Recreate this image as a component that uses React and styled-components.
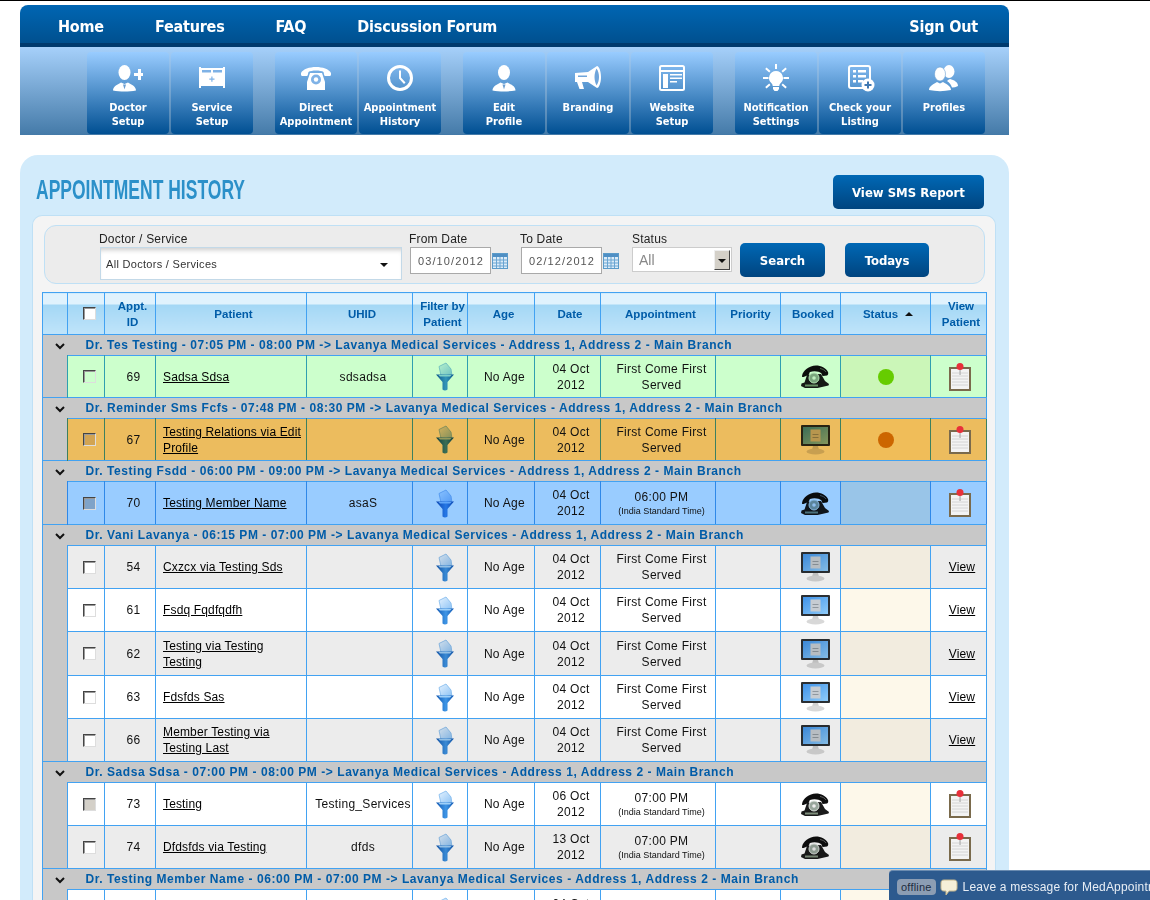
import React from 'react';
import styled, { createGlobalStyle } from 'styled-components';

const GlobalStyle = createGlobalStyle`
  html, body {
    margin: 0;
    height: 900px;
    overflow: hidden;
    background: #fff;
    font-family: "Liberation Sans", Arial, sans-serif;
  }
`;

const Page = styled.div`
  width: 1150px;
  height: 900px;
  overflow: hidden;
  position: relative;
  box-sizing: border-box;
  border-top: 1px solid #000;
  padding: 4px 141px 0 20px;
`;

const Nav = styled.nav`
  height: 42px;
  box-sizing: border-box;
  display: flex;
  align-items: center;
  gap: 51px;
  padding: 4px 31px 0 38px;
  border-radius: 8px 8px 0 0;
  border-bottom: 4px solid #003a6e;
  background: linear-gradient(#0066b3, #00508f);
`;

const NavLink = styled.a`
  color: #fff;
  font: bold 16px "DejaVu Sans Condensed", "DejaVu Sans", sans-serif;
  letter-spacing: -0.2px;
  ${({ $right }) => $right && 'margin-left: auto;'}
`;

const Toolbar = styled.div`
  height: 88px;
  box-sizing: border-box;
  display: flex;
  gap: 22px;
  padding: 5px 0 1px 67px;
  background: linear-gradient(#a6d0fa, #447aa8);
`;

const TileGroup = styled.div`
  display: flex;
  gap: 2px;
`;

const Tile = styled.a`
  width: 82px;
  box-sizing: border-box;
  padding-top: 12px;
  display: flex;
  flex-direction: column;
  align-items: center;
  border-radius: 4px;
  background: linear-gradient(#99ccff, #004f92);
  color: #fff;
  font: bold 11px/14px "DejaVu Sans Condensed", "DejaVu Sans", sans-serif;
  text-align: center;
  svg {
    display: block;
    margin-bottom: 9px;
  }
`;

const Panel = styled.main`
  margin-top: 20px;
  height: 760px;
  box-sizing: border-box;
  padding: 20px 13px 0 12px;
  border-radius: 18px 18px 0 0;
  background: #d2ebfb;
`;

const TitleRow = styled.div`
  height: 40px;
  display: flex;
  justify-content: space-between;
  align-items: flex-start;
  padding: 0 12px 0 4px;
`;

const Title = styled.h1`
  margin: -2px 0 0;
  font: bold 17.5px/20px "Liberation Sans Narrow", "Liberation Sans", sans-serif;
  color: #2b90c9;
  transform: scaleY(1.6);
  transform-origin: left top;
`;

const BlueButton = styled.button`
  height: 34px;
  width: ${({ $w }) => $w}px;
  padding: 0;
  border: 0;
  border-radius: 5px;
  background: linear-gradient(#0068b5, #00447f);
  color: #fff;
  font: bold 13px "DejaVu Sans Condensed", "DejaVu Sans", sans-serif;
`;

const Inner = styled.div`
  height: 720px;
  box-sizing: border-box;
  padding: 9px 10px 0 10px;
  border: 1px solid #bfe0f5;
  border-bottom: 0;
  border-radius: 10px 10px 0 0;
  background: #f4f4f4;
`;

const FilterBar = styled.div`
  height: 59px;
  box-sizing: border-box;
  margin: 0 0 8px 1px;
  padding: 6px 0 0 54px;
  display: flex;
  border: 1px solid #bfe0f5;
  border-radius: 12px;
  background: #ececec;
`;

const Field = styled.div`
  margin-right: ${({ $mr }) => $mr || 0}px;
`;

const FieldLabel = styled.div`
  font-size: 12px;
  line-height: 14px;
  height: 15px;
  color: #222;
  letter-spacing: 0.2px;
`;

const FieldRow = styled.div`
  display: flex;
  align-items: center;
  gap: 1px;
`;

const DoctorSelect = styled.div`
  width: 302px;
  height: 33px;
  margin-left: 1px;
  box-sizing: border-box;
  padding: 0 13px 0 5px;
  display: flex;
  align-items: center;
  justify-content: space-between;
  border: 1px solid #c3d9e8;
  background: #fff;
  box-shadow: inset 0 5px 5px -3px #ccc;
  font-size: 11px;
  letter-spacing: 0.3px;
  color: #333;
`;

const DownArrow = styled.span`
  width: 0;
  height: 0;
  border-left: 4px solid transparent;
  border-right: 4px solid transparent;
  border-top: 4px solid #111;
  margin-top: 2px;
`;

const DateInput = styled.div`
  width: 81px;
  height: 27px;
  margin-left: 1px;
  box-sizing: border-box;
  padding-left: 7px;
  display: flex;
  align-items: center;
  border: 1px solid #a9a9a9;
  background: #fff;
  font-size: 11px;
  letter-spacing: 1.1px;
  color: #555;
`;

const StatusSelect = styled.div`
  width: 100px;
  height: 25px;
  box-sizing: border-box;
  padding: 0 1px 0 6px;
  display: flex;
  align-items: center;
  justify-content: space-between;
  border: 1px solid #ccc;
  background: #fff;
  font-size: 14px;
  color: #888;
`;

const SelectButton = styled.span`
  width: 16px;
  height: 20px;
  display: flex;
  align-items: center;
  justify-content: center;
  box-sizing: border-box;
  border: 1px solid;
  border-color: #eee #444 #444 #eee;
  background: #d4d0c8;
`;

const ButtonSlot = styled.div`
  margin: 11px ${({ $mr }) => $mr || 0}px 0 ${({ $ml }) => $ml || 0}px;
`;

const Grid = styled.table`
  width: 944px;
  margin-left: -1px;
  table-layout: fixed;
  border-collapse: collapse;
  font-size: 12px;
  color: #111;
`;

const Head = styled.th`
  height: 41px;
  padding: 0 0 0 ${({ $pl }) => ($pl === undefined ? 5 : $pl)}px;
  border: 1px solid #42a2f2;
  background: linear-gradient(#e0f2fd 0 11px, #a3d7f5 11px, #c0e4fa);
  color: #005ca8;
  font-size: 11.5px;
  line-height: 16px;
  font-weight: bold;
`;

const SortArrow = styled.span`
  display: inline-block;
  width: 0;
  height: 0;
  margin: 0 0 2px 7px;
  border-left: 4px solid transparent;
  border-right: 4px solid transparent;
  border-bottom: 4px solid #111;
`;

const GroupCell = styled.td`
  height: ${({ $h }) => $h || 20}px;
  padding: 0;
  border-top: 1px solid #42a2f2;
  ${({ $edge }) => $edge === 'left' && 'border-left: 1px solid #42a2f2;'}
  ${({ $edge }) => $edge === 'right' && 'border-right: 1px solid #42a2f2;'}
  background: #c8c8c8;
  color: #005ca8;
  font-weight: bold;
  font-size: 12px;
  letter-spacing: 0.55px;
  white-space: nowrap;
  svg {
    display: block;
    margin: 2px 0 0 12px;
  }
  span {
    display: block;
    margin-left: 18px;
  }
`;

const Gutter = styled.td`
  padding: 0;
  border-left: 1px solid #42a2f2;
  border-right: 1px solid ${({ $line }) => $line};
  background: #c8c8c8;
`;

const Cell = styled.td`
  height: ${({ $h }) => $h}px;
  padding: 0 0 0 ${({ $pl }) => ($pl === undefined ? 7 : $pl)}px;
  box-sizing: border-box;
  border-left: 1px solid ${({ $line }) => $line};
  border-right: 1px solid ${({ $line }) => $line};
  border-top: 1px solid #42a2f2;
  border-bottom: 1px solid #42a2f2;
  background: ${({ $bg }) => $bg};
  text-align: ${({ $left }) => ($left ? 'left' : 'center')};
  line-height: 16px;
  letter-spacing: 0.3px;
  overflow: hidden;
  svg {
    display: block;
    margin: 0 auto;
  }
`;

const Blend = styled.div`
  mix-blend-mode: multiply;
`;

const PatientLink = styled.a`
  color: #000;
  text-decoration: underline;
  letter-spacing: 0.15px;
  white-space: nowrap;
`;

const SmallNote = styled.div`
  font-size: 9px;
  line-height: 13px;
  letter-spacing: 0;
`;

const Check = styled.input.attrs({ type: 'checkbox' })`
  appearance: none;
  display: block;
  width: 13px;
  height: 13px;
  margin: 0 auto;
  box-sizing: border-box;
  border: 1px solid;
  border-color: #444 #ddd #ddd #444;
  box-shadow: inset 1px 1px 0 #999;
  background: ${({ $fill }) => $fill};
`;

const Dot = styled.span`
  display: block;
  width: 16px;
  height: 16px;
  margin: 0 auto;
  border-radius: 50%;
  background: ${({ $color }) => $color};
`;

const Chat = styled.div`
  position: absolute;
  left: 889px;
  top: 869px;
  width: 261px;
  height: 31px;
  box-sizing: border-box;
  padding: 8px 0 0 8px;
  display: flex;
  align-items: flex-start;
  gap: 4px;
  overflow: hidden;
  white-space: nowrap;
  border-radius: 4px 0 0 0;
  border-top: 1px solid #6a8bb0;
  background: #2d5a8e;
  color: #e8eef5;
  font-size: 12px;
  letter-spacing: 0.2px;
  svg {
    flex: none;
  }
`;

const OfflineBadge = styled.span`
  flex: none;
  padding: 0 4px;
  height: 16px;
  line-height: 17px;
  border-radius: 4px;
  background: #8c9db3;
  color: #1d2c40;
  font-size: 11px;
  letter-spacing: 0.2px;
`;

const ChatText = styled.span`
  flex: none;
  margin-left: 1px;
  line-height: 16px;
`;

/* toolbar drawings, 30x28, white on the tile */
const Ico = ({ children }) => (
  <svg width="30" height="28" viewBox="0 0 30 28" fill="#fff">{children}</svg>
);

const PersonBody = ({ x = 0 }) => (
  <g transform={`translate(${x} 0)`}>
    <ellipse cx="11.5" cy="8.5" rx="6" ry="7.5" />
    <path d="M0 26.5C0 22 5 20.5 8 18.5L11.5 20L15 18.5C18 20.5 23 22 23 26.5C16 27.8 7 27.8 0 26.5Z" />
    <path d="M10 20.5h3l-1.5 5z" fill="#6c9fd2" />
  </g>
);

const DoctorIcon = () => (
  <Ico>
    <PersonBody />
    <path d="M21 9h4V5h3v4h2v3h-2v4h-3v-4h-4z" />
  </Ico>
);

const BedIcon = () => (
  <Ico>
    <path d="M2 3h2v1h22V3h2v21h-2v-2H4v2H2z" />
    <path d="M5 6h9v2.500H5zM16 6h9v2.500h-9z" fill="#7fb2e6" />
    <path d="M14.300 12.500h1.200v2h2v1.200h-2v2h-1.200v-2h-2v-1.200h2z" fill="#7fb2e6" />
  </Ico>
);

const PhoneIcon = () => (
  <Ico>
    <path d="M0 9C4 1 26 1 30 9c.4 2-.5 3-1 3h-5c-1 0-1-3-1.500-4C20 6 10 6 7.500 8 7 9 7 12 6 12H1c-.5 0-1.400-1-1-3Z" />
    <path d="M9 9h12l3 9v8H6v-8z" />
    <circle cx="15" cy="15.500" r="5" fill="#7fb2e6" />
    <circle cx="15" cy="15.500" r="2.200" fill="#fff" />
  </Ico>
);

const ClockIcon = () => (
  <Ico>
    <circle cx="15" cy="14" r="11.500" fill="none" stroke="#fff" strokeWidth="3" />
    <path d="M14 6.500h2v7l4.500 5-1.500 1.500-5-5.500z" />
  </Ico>
);

const ProfileIcon = () => (
  <Ico>
    <PersonBody x="3.500" />
  </Ico>
);

const MegaphoneIcon = () => (
  <Ico>
    <path d="M2 9l13-1 9-6c2 0 4 5 4 11s-2 11-4 11l-9-6H9l2 7H6.500L4 18H2z" />
    <path d="M23.500 4.500c1.500 2 2.500 5 2.500 8.500s-1 6.500-2.500 8.500c-1-2-2-5-2-8.500s1-6.500 2-8.500Z" fill="#6fa5db" />
    <path d="M5 11.500h9v1.500H5z" fill="#6fa5db" />
  </Ico>
);

const WebsiteIcon = () => (
  <Ico>
    <rect x="3" y="2" width="24" height="24" rx="1.500" fill="none" stroke="#fff" strokeWidth="2" />
    <path d="M4 6h22v2H4zM6 10h5v14H6zM13 10h12v1.500H13zM13 13.500h12v1.500H13zM13 17h7v1.500h-7z" />
  </Ico>
);

const BulbIcon = () => (
  <Ico>
    <path d="M15 7a7 7 0 0 1 4.500 12.300c-.8.8-1.200 1.700-1.200 2.700h-6.600c0-1-.4-1.900-1.200-2.700A7 7 0 0 1 15 7Z" />
    <path d="M12 23h6v2l-1.500 2h-3L12 25z" />
    <path d="M14 0h2v5h-2zM2 13h5.500v2H2zM22.500 13H28v2h-5.500zM5.500 3.500l4 3.500-1.300 1.500-4-3.500zM24.500 3.500l1.300 1.500-4 3.500-1.300-1.500zM8.200 19.500l1.300 1.500-4 3.500L4.200 23zM21.800 19.500l4 3.500-1.300 1.500-4-3.500z" />
  </Ico>
);

const ListingIcon = () => (
  <Ico>
    <rect x="4" y="2" width="21" height="22" rx="2" fill="none" stroke="#fff" strokeWidth="2" />
    <path d="M8 6h3v2.500H8zM13 6h8v2.500h-8zM8 11h3v2.500H8zM13 11h8v2.500h-8zM8 16h3v2.500H8zM13 16h5v2.500h-5z" />
    <circle cx="23" cy="21" r="6.500" fill="#fff" />
    <path d="M22 17.500h2V20h2.500v2H24v2.500h-2V22h-2.500v-2H22z" fill="#3f78b2" />
  </Ico>
);

const PeopleIcon = () => (
  <Ico>
    <ellipse cx="20" cy="7.500" rx="5.500" ry="6.500" />
    <path d="M21 15c4 1 8 3 8 7-2 1-4 1.500-6 1.500-1-3-2.500-5-5-6.500 1-1 2-1.500 3-2Z" />
    <ellipse cx="11" cy="10" rx="5.500" ry="7" fill="#fff" stroke="#6c9fd2" strokeWidth=".6" />
    <path d="M0 26c0-4 5-6 8-8l3 1.500 3-1.500c3 2 8 4 8 8-7 1.500-15 1.500-22 0Z" />
  </Ico>
);

/* table drawings */
const FunnelIcon = () => (
  <svg width="18" height="29" viewBox="0 0 18 29">
    <defs>
      <linearGradient id="funnelBody" x1="0" y1="0" x2="1" y2="0">
        <stop offset="0" stopColor="#0f55b0" />
        <stop offset=".55" stopColor="#3f96e6" />
        <stop offset="1" stopColor="#0f55b0" />
      </linearGradient>
      <linearGradient id="funnelPaper" x1="0" y1="0" x2="1" y2="1">
        <stop offset="0" stopColor="#e4f2ff" />
        <stop offset="1" stopColor="#8cc2f4" />
      </linearGradient>
    </defs>
    <path d="M3 4.500L10 1l5 6 1 6.500H5z" fill="url(#funnelPaper)" stroke="#7db8ec" strokeWidth=".8" />
    <path d="M0 12.500h18l-6.500 7.500v7.500c-1.500 1.300-3.500 1.300-5 0V20z" fill="url(#funnelBody)" />
    <path d="M2.500 13h13l-1.500 1.600H4z" fill="#9fd0f8" />
  </svg>
);

const TelephoneIcon = () => (
  <svg width="30" height="23" viewBox="0 0 30 23">
    <path d="M2 11C3 5 9 1 16 .5c5 0 10 2.500 12 6.500 .6 1.500 0 3-1 3.500l-4 .5c-1 0-1-1.500-1.500-2.500-2.500-2.500-8-3-11.500-1.500-1 .8-.5 2-1.500 3l-5 2c-1.200.3-1.700-.5-1.500-1Z" fill="#0e0e0e" />
    <path d="M7 10l14-1 4 7 4 3-.5 1.500-11 2.500H5l-4-2 .5-2.500 3-1z" fill="#1a1a1a" />
    <circle cx="14" cy="13" r="5" fill="#98a69c" stroke="#dfe4df" strokeWidth="1" />
    <circle cx="14" cy="13" r="1.800" fill="#eee" />
    <path d="M5 19.500h13v2H5z" fill="#7f8f7c" />
    <path d="M20 3.500c3 .6 5 1.800 6 3.500" fill="none" stroke="#777" strokeWidth=".8" />
  </svg>
);

const MonitorIcon = () => (
  <svg width="29" height="30" viewBox="0 0 29 30">
    <defs>
      <linearGradient id="screenFill" x1="0" y1="0" x2="1" y2="1">
        <stop offset="0" stopColor="#3f93ea" />
        <stop offset="1" stopColor="#8fcbf8" />
      </linearGradient>
    </defs>
    <rect x="0" y="0" width="29" height="21" rx="1" fill="#2b2f33" />
    <rect x="2" y="2" width="25" height="17" fill="url(#screenFill)" />
    <rect x="9.500" y="4.500" width="10" height="12" fill="#c6ccd2" />
    <path d="M11.500 9h6v1h-6zM11.500 12h6v1h-6z" fill="#8f979e" />
    <path d="M12 21h5l1 4h-7z" fill="#cfcfcf" />
    <ellipse cx="14.500" cy="26.500" rx="9" ry="3" fill="#d8d8d8" />
  </svg>
);

const ClipboardIcon = () => (
  <svg width="22" height="28" viewBox="0 0 22 28">
    <rect x="0" y="4" width="22" height="24" fill="#7a6a4c" />
    <rect x="2" y="6" width="18" height="20" fill="#f3f3f3" />
    <path d="M3 10h16M3 13h16M3 16h16M3 19h16M3 22h16" stroke="#d4d4d4" strokeWidth="1" />
    <rect x="10.300" y="5" width="1.500" height="7" fill="#b9b9b9" />
    <circle cx="11" cy="3.500" r="3.500" fill="#e8303a" />
  </svg>
);

const CalendarIcon = () => (
  <svg width="16" height="16" viewBox="0 0 16 16">
    <rect x=".5" y=".5" width="15" height="15" fill="#dcecf8" stroke="#5b9bc9" />
    <rect x="1" y="1" width="14" height="3" fill="#4f8fc4" />
    <path d="M1 7h14M1 10h14M1 13h14M4.500 4v11M8 4v11M11.500 4v11" stroke="#6aa5d2" strokeWidth="1" />
  </svg>
);

const Chevron = () => (
  <svg width="10" height="7" viewBox="0 0 10 7">
    <path d="M1 1l4 4 4-4" fill="none" stroke="#111" strokeWidth="2" />
  </svg>
);

const tiles = [
  [
    { label: ['Doctor', 'Setup'], icon: <DoctorIcon /> },
    { label: ['Service', 'Setup'], icon: <BedIcon /> },
  ],
  [
    { label: ['Direct', 'Appointment'], icon: <PhoneIcon /> },
    { label: ['Appointment', 'History'], icon: <ClockIcon /> },
  ],
  [
    { label: ['Edit', 'Profile'], icon: <ProfileIcon /> },
    { label: ['Branding'], icon: <MegaphoneIcon /> },
    { label: ['Website', 'Setup'], icon: <WebsiteIcon /> },
  ],
  [
    { label: ['Notification', 'Settings'], icon: <BulbIcon /> },
    { label: ['Check your', 'Listing'], icon: <ListingIcon /> },
    { label: ['Profiles'], icon: <PeopleIcon /> },
  ],
];

const columns = [25, 37, 51, 151, 106, 55, 67, 66, 115, 65, 60, 90, 56];

const themes = {
  green: { bg: '#ccffcc', status: '#cbf6b8', line: '#2f9fb0', check: 'transparent' },
  orange: { bg: '#ecbc5e', status: '#f0bd59', line: '#3d8060', check: '#d2a452' },
  blue: { bg: '#99ccff', status: '#99c5e8', line: '#2f88e8', check: '#7fa3c8' },
  grey: { bg: '#ececec', status: '#f2ecdf', line: '#42a2f2', check: '#fff' },
  white: { bg: '#ffffff', status: '#fdf8ea', line: '#42a2f2', check: '#fff' },
};

const groups = [
  {
    title: 'Dr. Tes Testing - 07:05 PM - 08:00 PM -> Lavanya Medical Services - Address 1, Address 2 - Main Branch',
    h: 20,
    rows: [{ id: 69, name: ['Sadsa Sdsa'], uhid: 'sdsadsa', day: '04 Oct', booked: 'phone', dot: '#66cc00', view: true, theme: 'green', h: 42 }],
  },
  {
    title: 'Dr. Reminder Sms Fcfs - 07:48 PM - 08:30 PM -> Lavanya Medical Services - Address 1, Address 2 - Main Branch',
    h: 20,
    rows: [{ id: 67, name: ['Testing Relations via Edit', 'Profile'], uhid: '', day: '04 Oct', booked: 'web', dot: '#cc6600', view: true, theme: 'orange', h: 42 }],
  },
  {
    title: 'Dr. Testing Fsdd - 06:00 PM - 09:00 PM -> Lavanya Medical Services - Address 1, Address 2 - Main Branch',
    h: 20,
    rows: [{ id: 70, name: ['Testing Member Name'], uhid: 'asaS', day: '04 Oct', time: '06:00 PM', booked: 'phone', view: true, theme: 'blue', h: 43 }],
  },
  {
    title: 'Dr. Vani Lavanya - 06:15 PM - 07:00 PM -> Lavanya Medical Services - Address 1, Address 2 - Main Branch',
    h: 19,
    rows: [
      { id: 54, name: ['Cxzcx via Testing Sds'], uhid: '', day: '04 Oct', booked: 'web', theme: 'grey', h: 43 },
      { id: 61, name: ['Fsdq Fqdfqdfh'], uhid: '', day: '04 Oct', booked: 'web', theme: 'white', h: 43 },
      { id: 62, name: ['Testing via Testing', 'Testing'], uhid: '', day: '04 Oct', booked: 'web', theme: 'grey', h: 44 },
      { id: 63, name: ['Fdsfds Sas'], uhid: '', day: '04 Oct', booked: 'web', theme: 'white', h: 43 },
      { id: 66, name: ['Member Testing via', 'Testing Last'], uhid: '', day: '04 Oct', booked: 'web', theme: 'grey', h: 43 },
    ],
  },
  {
    title: 'Dr. Sadsa Sdsa - 07:00 PM - 08:00 PM -> Lavanya Medical Services - Address 1, Address 2 - Main Branch',
    h: 19,
    rows: [
      { id: 73, name: ['Testing'], uhid: 'Testing_Services', day: '06 Oct', time: '07:00 PM', booked: 'phone', view: true, theme: 'white', check: '#d4d0c8', h: 43 },
      { id: 74, name: ['Dfdsfds via Testing'], uhid: 'dfds', day: '13 Oct', time: '07:00 PM', booked: 'phone', view: true, theme: 'grey', h: 43 },
    ],
  },
  {
    title: 'Dr. Testing Member Name - 06:00 PM - 07:00 PM -> Lavanya Medical Services - Address 1, Address 2 - Main Branch',
    h: 19,
    rows: [{ id: 75, name: ['Testing'], uhid: '', day: '04 Oct', time: '06:00 PM', booked: 'phone', view: true, theme: 'white', h: 44 }],
  },
];

const DataRow = ({ row }) => {
  const t = themes[row.theme];
  const base = { $bg: t.bg, $line: t.line, $h: row.h };
  return (
    <tr>
      <Gutter $line={t.line} />
      <Cell {...base} $pl={7}>
        <Check $fill={row.check || t.check} readOnly />
      </Cell>
      <Cell {...base}>{row.id}</Cell>
      <Cell {...base} $left>
        <PatientLink>
          {row.name.map((line, i) => (
            <React.Fragment key={line}>
              {i > 0 && <br />}
              {line}
            </React.Fragment>
          ))}
        </PatientLink>
      </Cell>
      <Cell {...base}>{row.uhid}</Cell>
      <Cell {...base} $pl={9}>
        <Blend>
          <FunnelIcon />
        </Blend>
      </Cell>
      <Cell {...base}>No Age</Cell>
      <Cell {...base}>
        {row.day}
        <br />
        2012
      </Cell>
      <Cell {...base}>
        {row.time ? (
          <>
            {row.time}
            <SmallNote>(India Standard Time)</SmallNote>
          </>
        ) : (
          <>
            First Come First
            <br />
            Served
          </>
        )}
      </Cell>
      <Cell {...base} />
      <Cell {...base} $pl={9}>
        <Blend>{row.booked === 'phone' ? <TelephoneIcon /> : <MonitorIcon />}</Blend>
      </Cell>
      <Cell {...base} $bg={t.status} $pl={0}>
        {row.dot && <Dot $color={row.dot} />}
      </Cell>
      <Cell {...base} $pl={row.view ? 2 : 7}>
        {row.view ? <ClipboardIcon /> : <PatientLink>View</PatientLink>}
      </Cell>
    </tr>
  );
};

const App = () => (
  <Page>
    <GlobalStyle />
    <Nav>
      <NavLink>Home</NavLink>
      <NavLink>Features</NavLink>
      <NavLink>FAQ</NavLink>
      <NavLink>Discussion Forum</NavLink>
      <NavLink $right>Sign Out</NavLink>
    </Nav>
    <Toolbar>
      {tiles.map((group) => (
        <TileGroup key={group[0].label[0]}>
          {group.map((tile) => (
            <Tile key={tile.label[0]}>
              {tile.icon}
              {tile.label.map((line) => (
                <div key={line}>{line}</div>
              ))}
            </Tile>
          ))}
        </TileGroup>
      ))}
    </Toolbar>
    <Panel>
      <TitleRow>
        <Title>APPOINTMENT HISTORY</Title>
        <BlueButton $w={151}>View SMS Report</BlueButton>
      </TitleRow>
      <Inner>
        <FilterBar>
          <Field $mr={7}>
            <FieldLabel>Doctor / Service</FieldLabel>
            <DoctorSelect>
              All Doctors / Services
              <DownArrow />
            </DoctorSelect>
          </Field>
          <Field $mr={12}>
            <FieldLabel>From Date</FieldLabel>
            <FieldRow>
              <DateInput>03/10/2012</DateInput>
              <CalendarIcon />
            </FieldRow>
          </Field>
          <Field $mr={13}>
            <FieldLabel>To Date</FieldLabel>
            <FieldRow>
              <DateInput>02/12/2012</DateInput>
              <CalendarIcon />
            </FieldRow>
          </Field>
          <Field>
            <FieldLabel>Status</FieldLabel>
            <StatusSelect>
              All
              <SelectButton>
                <DownArrow />
              </SelectButton>
            </StatusSelect>
          </Field>
          <ButtonSlot $ml={8} $mr={20}>
            <BlueButton $w={85}>Search</BlueButton>
          </ButtonSlot>
          <ButtonSlot>
            <BlueButton $w={84}>Todays</BlueButton>
          </ButtonSlot>
        </FilterBar>
        <Grid>
          <colgroup>
            {columns.map((w, i) => (
              <col key={i} style={{ width: w }} />
            ))}
          </colgroup>
          <thead>
            <tr>
              <Head />
              <Head $pl={7}>
                <Check $fill="#fff" readOnly />
              </Head>
              <Head>
                Appt.
                <br />
                ID
              </Head>
              <Head>Patient</Head>
              <Head>UHID</Head>
              <Head>
                Filter by
                <br />
                Patient
              </Head>
              <Head>Age</Head>
              <Head>Date</Head>
              <Head>Appointment</Head>
              <Head>Priority</Head>
              <Head>Booked</Head>
              <Head>
                Status
                <SortArrow />
              </Head>
              <Head>
                View
                <br />
                Patient
              </Head>
            </tr>
          </thead>
          <tbody>
            {groups.map((group) => (
              <React.Fragment key={group.title}>
                <tr>
                  <GroupCell $edge="left" $h={group.h}>
                    <Chevron />
                  </GroupCell>
                  <GroupCell $edge="right" colSpan={12}>
                    <span>{group.title}</span>
                  </GroupCell>
                </tr>
                {group.rows.map((row) => (
                  <DataRow key={row.id} row={row} />
                ))}
              </React.Fragment>
            ))}
          </tbody>
        </Grid>
      </Inner>
    </Panel>
    <Chat>
      <OfflineBadge>offline</OfflineBadge>
      <svg width="18" height="17" viewBox="0 0 18 17">
        <path d="M4 1h10c2 0 3 1 3 3v5c0 2-1 3-3 3H9l-3 4v-4H4c-2 0-3-1-3-3V4c0-2 1-3 3-3Z" fill="#f5efd8" stroke="#c9b98e" />
      </svg>
      <ChatText>Leave a message for MedAppointments</ChatText>
    </Chat>
  </Page>
);

export default App;
